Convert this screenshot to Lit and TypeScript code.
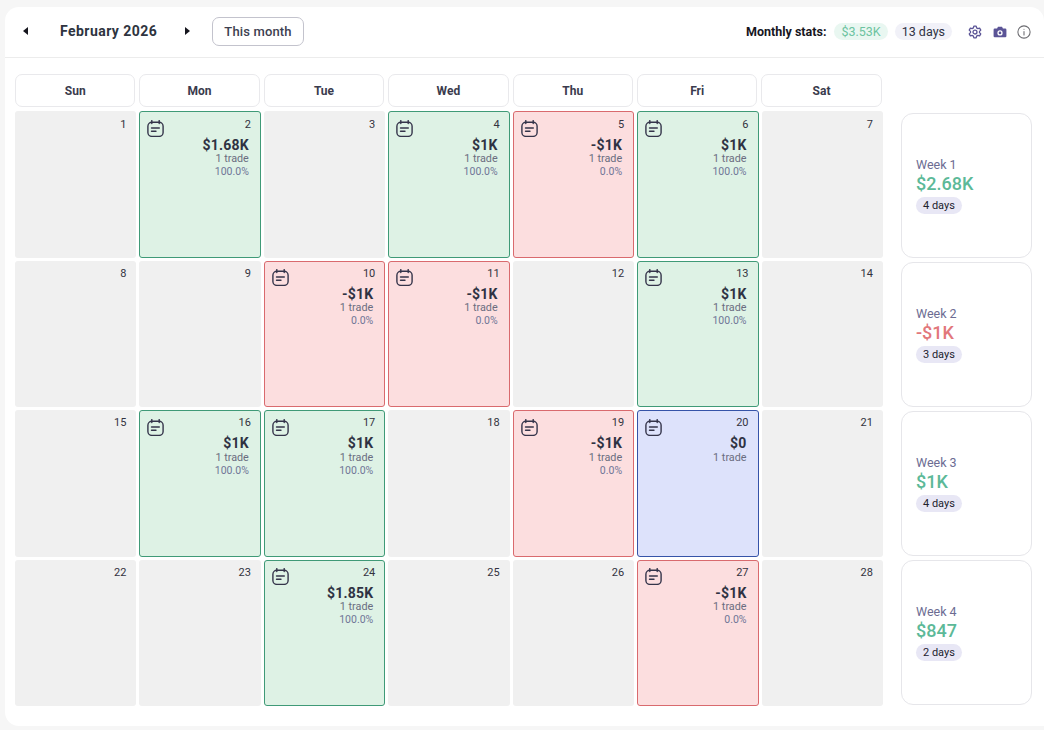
import { LitElement, html, css, svg } from 'lit';
import { customElement } from 'lit/decorators.js';

type Day = { n: number; pnl?: string; pct?: string; kind?: 'win' | 'loss' | 'flat' };

const days: Day[] = [
  { n: 1 },
  { n: 2, pnl: '$1.68K', pct: '100.0%', kind: 'win' },
  { n: 3 },
  { n: 4, pnl: '$1K', pct: '100.0%', kind: 'win' },
  { n: 5, pnl: '-$1K', pct: '0.0%', kind: 'loss' },
  { n: 6, pnl: '$1K', pct: '100.0%', kind: 'win' },
  { n: 7 },
  { n: 8 },
  { n: 9 },
  { n: 10, pnl: '-$1K', pct: '0.0%', kind: 'loss' },
  { n: 11, pnl: '-$1K', pct: '0.0%', kind: 'loss' },
  { n: 12 },
  { n: 13, pnl: '$1K', pct: '100.0%', kind: 'win' },
  { n: 14 },
  { n: 15 },
  { n: 16, pnl: '$1K', pct: '100.0%', kind: 'win' },
  { n: 17, pnl: '$1K', pct: '100.0%', kind: 'win' },
  { n: 18 },
  { n: 19, pnl: '-$1K', pct: '0.0%', kind: 'loss' },
  { n: 20, pnl: '$0', kind: 'flat' },
  { n: 21 },
  { n: 22 },
  { n: 23 },
  { n: 24, pnl: '$1.85K', pct: '100.0%', kind: 'win' },
  { n: 25 },
  { n: 26 },
  { n: 27, pnl: '-$1K', pct: '0.0%', kind: 'loss' },
  { n: 28 },
];

const weeks = [
  { label: 'Week 1', pnl: '$2.68K', days: '4 days', loss: false },
  { label: 'Week 2', pnl: '-$1K', days: '3 days', loss: true },
  { label: 'Week 3', pnl: '$1K', days: '4 days', loss: false },
  { label: 'Week 4', pnl: '$847', days: '2 days', loss: false },
];

const noteIcon = svg`<svg class="note" width="17" height="17" viewBox="0 0 17 17" fill="none" stroke="#34344a" stroke-width="1.4" stroke-linecap="round">
  <rect x="0.9" y="2.200" width="15.200" height="14.200" rx="4"/>
  <path d="M4.800 0.600V3.600M12.200 0.600V3.600"/>
  <path d="M4.500 8H12.300M4.500 11.200H9"/>
</svg>`;

@customElement('app-root')
export class AppRoot extends LitElement {
  static styles = css`
    :host {
      display: block;
      height: 730px;
      background: #f6f6f6;
      font-family: Roboto, 'Liberation Sans', sans-serif;
      color: #2f3243;
      overflow: hidden;
    }
    .card {
      margin: 7px 0 0 5px;
      height: 719px;
      background: #fff;
      border-radius: 14px 14px 0 14px;
      box-sizing: border-box;
    }
    .top {
      height: 51px;
      box-sizing: border-box;
      border-bottom: 1px solid #ececec;
      display: flex;
      align-items: center;
      padding: 0 13px 2px 18px;
    }
    .arrow {
      width: 0;
      height: 0;
      border-top: 4.5px solid transparent;
      border-bottom: 4.5px solid transparent;
    }
    .arrow.left {
      border-right: 5px solid #16161e;
    }
    .arrow.right {
      border-left: 5px solid #16161e;
    }
    .month {
      font-size: 14px;
      font-weight: 700;
      letter-spacing: 0.45px;
      color: #2e3440;
      margin-left: 32px;
      width: 125px;
    }
    .today {
      margin-left: 22px;
      height: 29px;
      width: 92px;
      box-sizing: border-box;
      display: flex;
      align-items: center;
      justify-content: center;
      border: 1px solid #c3c3cd;
      border-radius: 7px;
      font-size: 13px;
      font-weight: 500;
      letter-spacing: 0.15px;
      color: #3d4050;
    }
    .stats {
      margin-left: auto;
      display: flex;
      align-items: center;
    }
    .stats b {
      font-size: 12.5px;
      font-weight: 700;
      color: #16161e;
      margin-right: 8px;
    }
    .pill {
      font-size: 12.500px;
      line-height: 17px;
      padding: 0 7px;
      border-radius: 9px;
    }
    .pill.money {
      background: #e9f7f1;
      color: #6cc3a0;
      margin-right: 7px;
    }
    .pill.count {
      background: #f1f1f8;
      color: #2f3243;
      margin-right: 16px;
    }
    .icons {
      display: flex;
      align-items: center;
      gap: 10.500px;
      margin-top: 2px;
    }
    .body {
      display: grid;
      grid-template-columns: 868px 131px;
      column-gap: 18px;
      padding: 16px 0 0 10px;
    }
    .heads {
      display: grid;
      grid-template-columns: repeat(7, 120.4px);
      column-gap: 4px;
      margin-bottom: 4.400px;
    }
    .head {
      height: 33px;
      box-sizing: border-box;
      border: 1px solid #e9e9ec;
      border-radius: 7px;
      display: flex;
      align-items: center;
      justify-content: center;
      font-size: 12px;
      font-weight: 700;
      color: #3a3b4d;
    }
    .days {
      display: grid;
      grid-template-columns: repeat(7, 121.43px);
      grid-auto-rows: 146.4px;
      gap: 3px;
    }
    .day {
      position: relative;
      box-sizing: border-box;
      background: #f0f0f0;
      border-radius: 3px;
      padding: 6.300px 10px 0 0;
      text-align: right;
      font-size: 11px;
      line-height: 14px;
      color: #333340;
    }
    .day.win,
    .day.loss,
    .day.flat {
      padding: 5.300px 11px 0 0;
    }
    .day.win .num,
    .day.loss .num,
    .day.flat .num {
      margin-right: -2px;
    }
    .day.win {
      background: #def2e5;
      border: 1px solid #3f9a77;
    }
    .day.loss {
      background: #fcdedf;
      border: 1px solid #d96a6e;
    }
    .day.flat {
      background: #dde2fb;
      border: 1px solid #3553a8;
    }
    .note {
      position: absolute;
      left: 7px;
      top: 7.500px;
    }
    .pnl {
      font-size: 14px;
      font-weight: 700;
      line-height: 14px;
      margin: 6px 0 0.200px;
      color: #2f3243;
      letter-spacing: 0.2px;
    }
    .sub {
      font-size: 10.800px;
      line-height: 13px;
      color: #6a6d80;
    }
    .pct {
      font-size: 10.500px;
      color: #6f7597;
    }
    .weeks {
      display: grid;
      grid-auto-rows: 144.6px;
      row-gap: 4.400px;
      padding-top: 39px;
    }
    .week {
      box-sizing: border-box;
      border: 1px solid #e6e6ea;
      border-radius: 12px;
      display: flex;
      flex-direction: column;
      justify-content: center;
      align-items: flex-start;
      padding-left: 14px;
    }
    .week .label {
      font-size: 12.5px;
      line-height: 15px;
      color: #6c6c92;
    }
    .week .value {
      font-size: 18px;
      font-weight: 500;
      line-height: 23px;
      color: #5cb998;
    }
    .week .value.loss {
      color: #e2777b;
    }
    .week .tag {
      margin-top: 2px;
      font-size: 11px;
      line-height: 17px;
      padding: 0 7px;
      border-radius: 9px;
      background: #e8e7f5;
      color: #22222e;
    }
  `;

  renderDay(d: Day) {
    return html`
      <div class="day ${d.kind ?? ''}">
        ${d.kind ? noteIcon : ''}
        <div class="num">${d.n}</div>
        ${d.kind
          ? html`
              <div class="pnl">${d.pnl}</div>
              <div class="sub">1 trade</div>
              ${d.pct ? html`<div class="sub pct">${d.pct}</div>` : ''}
            `
          : ''}
      </div>
    `;
  }

  render() {
    return html`
      <div class="card">
        <div class="top">
          <span class="arrow left"></span>
          <span class="month">February 2026</span>
          <span class="arrow right"></span>
          <span class="today">This month</span>
          <div class="stats">
            <b>Monthly stats:</b>
            <span class="pill money">$3.53K</span>
            <span class="pill count">13 days</span>
            <div class="icons">
              <svg width="14" height="14" viewBox="0 0 24 24" fill="none" stroke="#5b5496" stroke-width="2.2" stroke-linejoin="round">
                <path d="M10 2h4l.7 3 2.3 1.3 2.9-.9 2 3.4-2.2 2.1v2.2l2.2 2.1-2 3.4-2.9-.9L14.700 19l-.7 3h-4l-.7-3L7 17.700l-2.900.9-2-3.400 2.200-2.100v-2.200L2.100 8.800l2-3.400 2.900.9L9.300 5z"/>
                <circle cx="12" cy="12" r="3.4"/>
              </svg>
              <svg width="14" height="14" viewBox="0 0 24 24">
                <path fill="#5b5496" fill-rule="evenodd" d="M8.500 3h7l1.500 3h4a2 2 0 0 1 2 2v11a2 2 0 0 1-2 2H3a2 2 0 0 1-2-2V8a2 2 0 0 1 2-2h4zM12 9a4.500 4.500 0 1 0 0 9 4.500 4.500 0 0 0 0-9z"/>
                <circle cx="12" cy="13.500" r="2.300" fill="#5b5496"/>
              </svg>
              <svg width="14" height="14" viewBox="0 0 24 24" fill="none" stroke="#6b6b70" stroke-width="1.8" stroke-linecap="round">
                <circle cx="12" cy="12" r="10.500"/>
                <path d="M12 11v6M12 7.200v.2"/>
              </svg>
            </div>
          </div>
        </div>
        <div class="body">
          <div>
            <div class="heads">
              ${['Sun', 'Mon', 'Tue', 'Wed', 'Thu', 'Fri', 'Sat'].map((h) => html`<div class="head">${h}</div>`)}
            </div>
            <div class="days">${days.map((d) => this.renderDay(d))}</div>
          </div>
          <div class="weeks">
            ${weeks.map(
              (w) => html`
                <div class="week">
                  <div class="label">${w.label}</div>
                  <div class="value ${w.loss ? 'loss' : ''}">${w.pnl}</div>
                  <div class="tag">${w.days}</div>
                </div>
              `
            )}
          </div>
        </div>
      </div>
    `;
  }
}
